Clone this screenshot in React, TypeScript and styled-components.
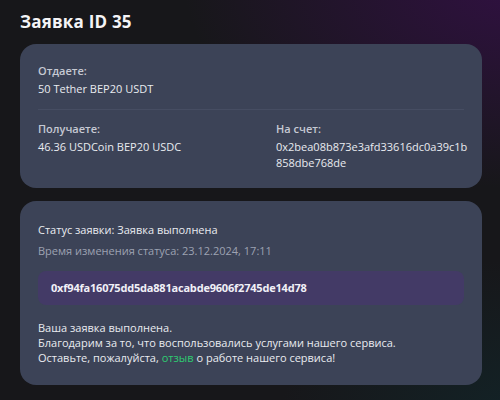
import React from "react";
import styled, { createGlobalStyle } from "styled-components";

const Global = createGlobalStyle`
  html, body { margin: 0; padding: 0; }
  body {
    width: 500px;
    height: 400px;
    overflow: hidden;
    font-family: "Open Sans", "Noto Sans", sans-serif;
    background:
      radial-gradient(ellipse 420px 260px at 520px -20px, rgba(50, 16, 68, 0.95), rgba(50,16,68,0) 80%),
      radial-gradient(ellipse 300px 200px at 520px 420px, rgba(18, 36, 40, 0.9), rgba(18,36,40,0) 80%),
      #17171a;
    color: #e6e8ee;
  }
`;

const Page = styled.div`
  padding: 12px 18px 0 20px;
  display: flex;
  flex-direction: column;
  gap: 13px;
  width: 462px;
`;

const Title = styled.h1`
  margin: 0 0 -1px;
  font-family: "Open Sans", sans-serif;
  font-weight: 700;
  font-size: 17px;
  line-height: 20px;
  color: #f4f4f6;
  letter-spacing: 0.2px;
`;

const Card = styled.section<{ $bottom?: number }>`
  background: #3c4357;
  border-radius: 16px;
  padding: 20px 18px ${(p) => p.$bottom ?? 20}px 18px;
  display: flex;
  flex-direction: column;
`;

const Divider = styled.div`
  height: 1px;
  background: #464d62;
  margin: 12px 0 12px;
`;

const Row = styled.div`
  display: grid;
  grid-template-columns: 238px 196px;
`;

const Field = styled.div`
  display: flex;
  flex-direction: column;
  gap: 3px;
`;

const Label = styled.div`
  font-size: 11px;
  line-height: 14px;
  font-weight: 600;
  color: #c6c9d3;
`;

const Value = styled.div`
  font-size: 11px;
  line-height: 16px;
  color: #e9ebf0;
  word-break: break-all;
`;

const Text = styled.div<{ $muted?: boolean }>`
  font-size: 11px;
  line-height: 15px;
  color: ${(p) => (p.$muted ? "#9da2b2" : "#e9ebf0")};
`;

const StatusBlock = styled.div`
  display: flex;
  flex-direction: column;
  gap: 6px;
  margin-top: 1px;
`;

const HashBox = styled.div`
  margin: 13px 0 15px;
  background: #433a66;
  border-radius: 8px;
  padding: 10px 13px;
  font-size: 11px;
  line-height: 14px;
  font-weight: 700;
  letter-spacing: -0.2px;
  color: #f1f0f7;
`;

const Link = styled.a`
  color: #2ecc71;
  text-decoration: none;
`;

export default function App() {
  return (
    <>
      <Global />
      <Page>
        <Title>Заявка ID 35</Title>
        <Card $bottom={17}>
          <Field>
            <Label>Отдаете:</Label>
            <Value>50 Tether BEP20 USDT</Value>
          </Field>
          <Divider />
          <Row>
            <Field>
              <Label>Получаете:</Label>
              <Value>46.36 USDCoin BEP20 USDC</Value>
            </Field>
            <Field>
              <Label>На счет:</Label>
              <Value>0x2bea08b873e3afd33616dc0a39c1b858dbe768de</Value>
            </Field>
          </Row>
        </Card>
        <Card>
          <StatusBlock>
            <Text>Статус заявки: Заявка выполнена</Text>
            <Text $muted>Время изменения статуса: 23.12.2024, 17:11</Text>
          </StatusBlock>
          <HashBox>0xf94fa16075dd5da881acabde9606f2745de14d78</HashBox>
          <Text>Ваша заявка выполнена.</Text>
          <Text>Благодарим за то, что воспользовались услугами нашего сервиса.</Text>
          <Text>
            Оставьте, пожалуйста, <Link href="#">отзыв</Link> о работе нашего сервиса!
          </Text>
        </Card>
      </Page>
    </>
  );
}
